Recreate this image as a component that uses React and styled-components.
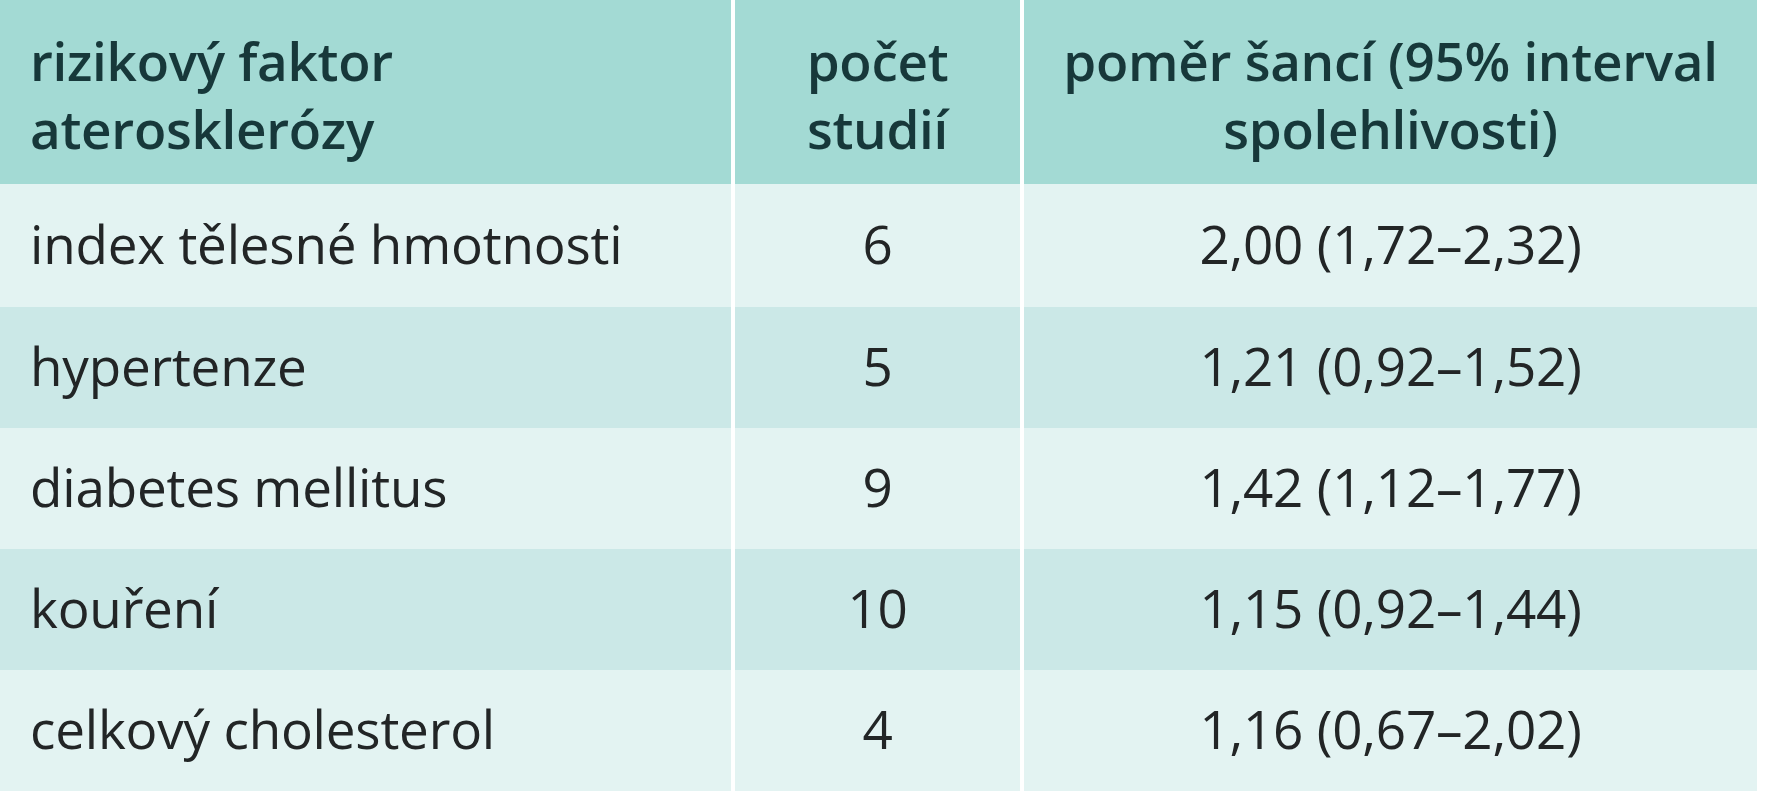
import React from 'react';
import styled, { createGlobalStyle } from 'styled-components';

const GlobalStyle = createGlobalStyle`
  html, body {
    margin: 0;
    padding: 0;
    background: #ffffff;
  }
  body {
    font-family: "Open Sans", "Noto Sans", "Liberation Sans", sans-serif;
  }
`;

const Table = styled.div`
  display: grid;
  grid-template-columns: 731px 285px 733px;
  grid-template-rows: 184px 123px repeat(4, 121px);
  column-gap: 4px;
  width: 1757px;
  background: #ffffff;
`;

const HeadCell = styled.div`
  box-sizing: border-box;
  padding: 6px 30px 0;
  display: flex;
  align-items: center;
  justify-content: ${({ align }) => (align === 'left' ? 'flex-start' : 'center')};
  text-align: ${({ align }) => align || 'center'};
  background: #a3dad4;
  color: #17383a;
  font-size: 53px;
  font-weight: 600;
  line-height: 68px;
  letter-spacing: -0.3px;
`;

const Cell = styled.div`
  box-sizing: border-box;
  padding: 0 30px 4px;
  display: flex;
  align-items: center;
  justify-content: ${({ align }) => (align === 'left' ? 'flex-start' : 'center')};
  background: ${({ shade }) => (shade ? '#cbe8e7' : '#e3f3f2')};
  color: #222526;
  font-size: 53px;
  font-weight: 400;
  white-space: nowrap;
  letter-spacing: -0.2px;
`;

const rows = [
  { factor: 'index tělesné hmotnosti', studies: '6', ratio: '2,00 (1,72–2,32)' },
  { factor: 'hypertenze', studies: '5', ratio: '1,21 (0,92–1,52)' },
  { factor: 'diabetes mellitus', studies: '9', ratio: '1,42 (1,12–1,77)' },
  { factor: 'kouření', studies: '10', ratio: '1,15 (0,92–1,44)' },
  { factor: 'celkový cholesterol', studies: '4', ratio: '1,16 (0,67–2,02)' },
];

const App = () => (
  <>
    <GlobalStyle />
    <Table>
      <HeadCell align="left">
        rizikový faktor<br />aterosklerózy
      </HeadCell>
      <HeadCell>
        počet<br />studií
      </HeadCell>
      <HeadCell>
        poměr šancí (95% interval<br />spolehlivosti)
      </HeadCell>
      {rows.map((r, i) => (
        <React.Fragment key={r.factor}>
          <Cell align="left" shade={i % 2 === 1}>{r.factor}</Cell>
          <Cell shade={i % 2 === 1}>{r.studies}</Cell>
          <Cell shade={i % 2 === 1}>{r.ratio}</Cell>
        </React.Fragment>
      ))}
    </Table>
  </>
);

export default App;
